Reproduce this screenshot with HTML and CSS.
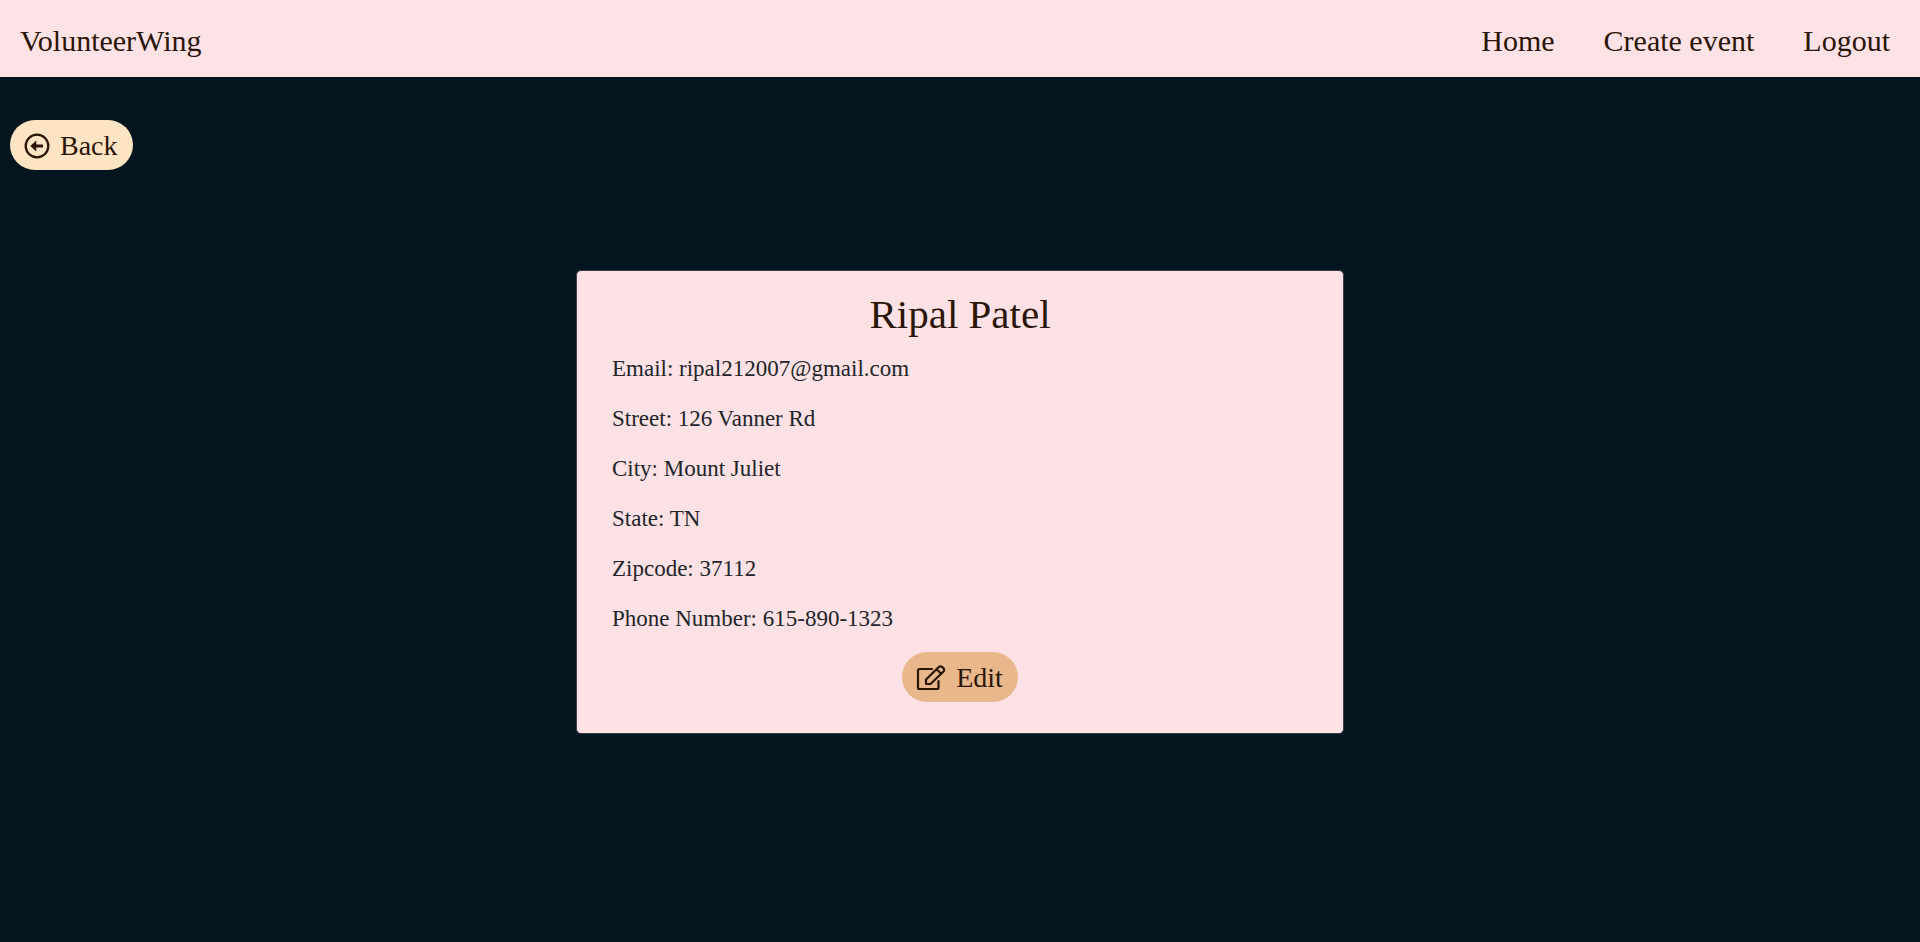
FILE: index.html
```html
<!DOCTYPE html>
<html lang="en">
<head>
<meta charset="utf-8">
<title>VolunteerWing</title>
<link rel="stylesheet" href="styles.css">
</head>
<body>
<header class="navbar">
  <a class="brand" href="#">VolunteerWing</a>
  <nav class="nav-links">
    <a href="#">Home</a>
    <a href="#">Create event</a>
    <a href="#">Logout</a>
  </nav>
</header>
<main class="page">
  <button class="pill pill-back" type="button">
    <svg class="icon-back" viewBox="0 0 26 26" aria-hidden="true">
      <circle cx="13" cy="13" r="11.300" fill="none" stroke="currentColor" stroke-width="2.300"/>
      <path d="M6.300 13 12.300 7.500V11.400H19V14.600H12.300V18.500z" fill="currentColor"/>
    </svg>
    Back
  </button>
  <section class="card">
    <h1 class="card-title">Ripal Patel</h1>
    <p>Email: ripal212007@gmail.com</p>
    <p>Street: 126 Vanner Rd</p>
    <p>City: Mount Juliet</p>
    <p>State: TN</p>
    <p>Zipcode: 37112</p>
    <p>Phone Number: 615-890-1323</p>
    <button class="pill pill-edit" type="button">
      <svg class="icon-edit" viewBox="0 0 30 26" fill="none" stroke="currentColor" stroke-width="2.200" stroke-linejoin="round" stroke-linecap="round" aria-hidden="true">
        <path d="M16 4H3.500Q2 4 2 5.500V22.500Q2 24 3.500 24H21Q22.500 24 22.500 22.500V16"/>
        <path d="M10 19V14.500L22.500 2.300Q24.500.500 26.500 2.300L27.300 3.100Q29 5 27.300 6.800L14.500 19zM20.500 4.300 25.300 8.800"/>
      </svg>
      Edit
    </button>
  </section>
</main>
</body>
</html>
```
FILE: styles.css
```css
* {
  box-sizing: border-box;
}

body {
  margin: 0;
  min-height: 100vh;
  background: #03151e;
  color: #212529;
  font-family: "Liberation Serif", serif;
}

.navbar {
  display: flex;
  align-items: center;
  justify-content: space-between;
  padding: 22px 30px 18px 20px;
  background: #ffe2e5;
  font-size: 30px;
  line-height: 37px;
}

.navbar a {
  color: #2a1506;
  text-decoration: none;
}

.nav-links {
  display: flex;
  gap: 49px;
}

.page {
  display: flex;
  flex-direction: column;
  align-items: flex-start;
  padding: 43px 10px;
}

.pill {
  display: flex;
  align-items: center;
  gap: 10px;
  padding: 7px 15px 5px 14px;
  border: 0;
  border-radius: 25px;
  color: #2a1506;
  font-family: inherit;
  font-size: 28px;
  line-height: 38px;
  cursor: pointer;
}

.pill-back {
  background: #ffe4c4;
}

.pill-edit {
  align-self: center;
  background: #e8b88c;
}

.icon-back {
  width: 26px;
  height: 26px;
}

.icon-edit {
  width: 30px;
  height: 26px;
}

.card {
  display: flex;
  flex-direction: column;
  align-self: center;
  width: 40vw;
  margin-top: 100px;
  padding: 19px 35px 31px;
  border: 1px solid #383f46;
  border-radius: 5px;
  background: #fde1e4;
}

.card-title {
  margin: 0 0 14px;
  color: #2a1506;
  font-size: 41px;
  font-weight: 400;
  line-height: 48px;
  text-align: center;
}

.card p {
  margin: 0 0 16px;
  font-size: 23px;
  line-height: 34px;
}
```
